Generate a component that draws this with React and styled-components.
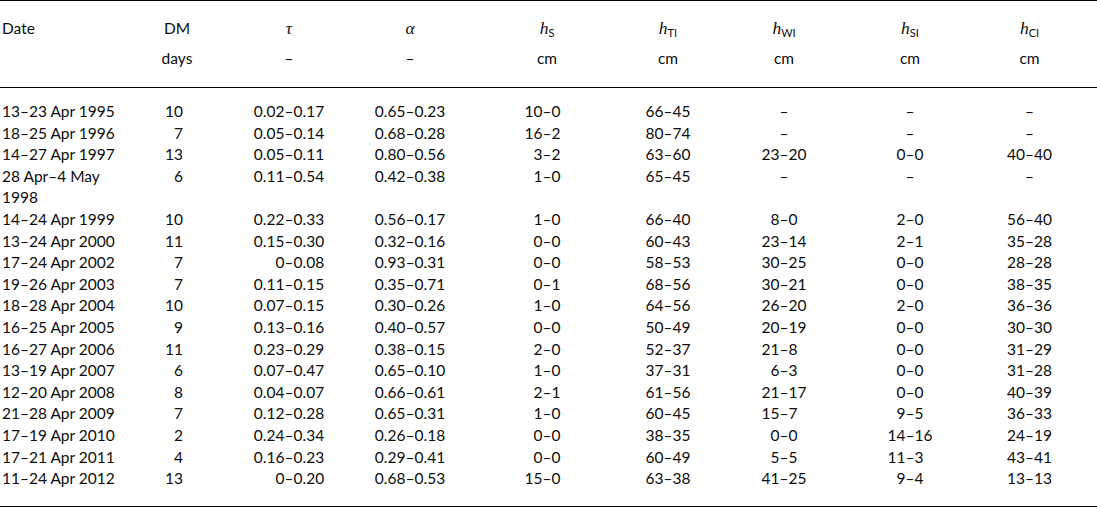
import React from 'react';
import styled, { createGlobalStyle } from 'styled-components';

const GlobalStyle = createGlobalStyle`
  body {
    margin: 0;
    background: #fff;
    font-family: Lato, "Open Sans", sans-serif;
    color: #0d0d0d;
  }
`;

// column widths: date, DM, tau, alpha, hS, hTI, hWI, hSI, hCI
const COLS = '128px 98px 126px 116px 158px 84px 148px 104px 135px';

const Table = styled.div`
  width: 1097px;
  border-top: 1px solid #000;
  border-bottom: 1px solid #000;
  font-size: 15.5px;
`;

const Head = styled.div`
  display: grid;
  grid-template-columns: ${COLS};
  grid-template-rows: 30px 30px;
  padding: 12px 0 14px;
  border-bottom: 1px solid #000;
  line-height: 30px;
`;

const HeadCell = styled.div`
  text-align: ${(p) => (p.$left ? 'left' : 'center')};
  padding-left: ${(p) => (p.$left ? '2px' : '0')};
`;

const Sym = styled.span`
  font-family: "Liberation Serif", serif;
  font-style: italic;
  font-size: 17.5px;
`;

const Sub = styled.sub`
  font-family: Lato, sans-serif;
  font-style: normal;
  font-size: 11px;
  vertical-align: -3px;
  line-height: 0;
`;

const Body = styled.div`
  padding: 13px 0 16px;
  line-height: 21.6px;
`;

const Row = styled.div`
  display: grid;
  grid-template-columns: ${COLS};
`;

const DateCell = styled.div`
  padding-left: 2px;
  padding-right: 8px;
`;

const Num = styled.div`
  text-align: right;
  padding-right: ${(p) => p.$pad}px;
`;

const Range = styled.div`
  display: flex;
  justify-content: center;
  align-items: baseline;
`;

const Part = styled.span`
  width: ${(p) => p.$w}px;
  text-align: ${(p) => (p.$right ? 'right' : 'left')};
  white-space: nowrap;
`;

const Dash = styled.span`
  width: 9px;
  text-align: center;
`;

const widths = [0, 0, 34, 34, 18, 18, 18, 18, 18];

const rows = [
  ['13–23 Apr 1995', '10', '0.02–0.17', '0.65–0.23', '10–0', '66–45', '–', '–', '–'],
  ['18–25 Apr 1996', '7', '0.05–0.14', '0.68–0.28', '16–2', '80–74', '–', '–', '–'],
  ['14–27 Apr 1997', '13', '0.05–0.11', '0.80–0.56', '3–2', '63–60', '23–20', '0–0', '40–40'],
  ['28 Apr–4 May 1998', '6', '0.11–0.54', '0.42–0.38', '1–0', '65–45', '–', '–', '–'],
  ['14–24 Apr 1999', '10', '0.22–0.33', '0.56–0.17', '1–0', '66–40', '8–0', '2–0', '56–40'],
  ['13–24 Apr 2000', '11', '0.15–0.30', '0.32–0.16', '0–0', '60–43', '23–14', '2–1', '35–28'],
  ['17–24 Apr 2002', '7', '0–0.08', '0.93–0.31', '0–0', '58–53', '30–25', '0–0', '28–28'],
  ['19–26 Apr 2003', '7', '0.11–0.15', '0.35–0.71', '0–1', '68–56', '30–21', '0–0', '38–35'],
  ['18–28 Apr 2004', '10', '0.07–0.15', '0.30–0.26', '1–0', '64–56', '26–20', '2–0', '36–36'],
  ['16–25 Apr 2005', '9', '0.13–0.16', '0.40–0.57', '0–0', '50–49', '20–19', '0–0', '30–30'],
  ['16–27 Apr 2006', '11', '0.23–0.29', '0.38–0.15', '2–0', '52–37', '21–8', '0–0', '31–29'],
  ['13–19 Apr 2007', '6', '0.07–0.47', '0.65–0.10', '1–0', '37–31', '6–3', '0–0', '31–28'],
  ['12–20 Apr 2008', '8', '0.04–0.07', '0.66–0.61', '2–1', '61–56', '21–17', '0–0', '40–39'],
  ['21–28 Apr 2009', '7', '0.12–0.28', '0.65–0.31', '1–0', '60–45', '15–7', '9–5', '36–33'],
  ['17–19 Apr 2010', '2', '0.24–0.34', '0.26–0.18', '0–0', '38–35', '0–0', '14–16', '24–19'],
  ['17–21 Apr 2011', '4', '0.16–0.23', '0.29–0.41', '0–0', '60–49', '5–5', '11–3', '43–41'],
  ['11–24 Apr 2012', '13', '0–0.20', '0.68–0.53', '15–0', '63–38', '41–25', '9–4', '13–13'],
];

const RangeCell = ({ value, w }) => {
  if (value === '–') {
    return (
      <Range>
        <Part $w={w} />
        <Dash>–</Dash>
        <Part $w={w} />
      </Range>
    );
  }
  const [a, b] = value.split('–');
  return (
    <Range>
      <Part $w={w} $right>{a}</Part>
      <Dash>–</Dash>
      <Part $w={w}>{b}</Part>
    </Range>
  );
};

const symbols = [
  [<Sym>τ</Sym>, '–'],
  [<Sym>α</Sym>, '–'],
  [<Sym>h<Sub>S</Sub></Sym>, 'cm'],
  [<Sym>h<Sub>TI</Sub></Sym>, 'cm'],
  [<Sym>h<Sub>WI</Sub></Sym>, 'cm'],
  [<Sym>h<Sub>SI</Sub></Sym>, 'cm'],
  [<Sym>h<Sub>CI</Sub></Sym>, 'cm'],
];

export default function App() {
  return (
    <>
      <GlobalStyle />
      <Table>
        <Head>
          <HeadCell $left>Date</HeadCell>
          <HeadCell>DM</HeadCell>
          {symbols.map((s, i) => (
            <HeadCell key={i}>{s[0]}</HeadCell>
          ))}
          <HeadCell $left />
          <HeadCell>days</HeadCell>
          {symbols.map((s, i) => (
            <HeadCell key={i}>{s[1]}</HeadCell>
          ))}
        </Head>
        <Body>
          {rows.map((r) => (
            <Row key={r[0]}>
              <DateCell>{r[0]}</DateCell>
              <Num $pad={43}>{r[1]}</Num>
              {r.slice(2).map((v, i) => (
                <RangeCell key={i} value={v} w={widths[i + 2]} />
              ))}
            </Row>
          ))}
        </Body>
      </Table>
    </>
  );
}
